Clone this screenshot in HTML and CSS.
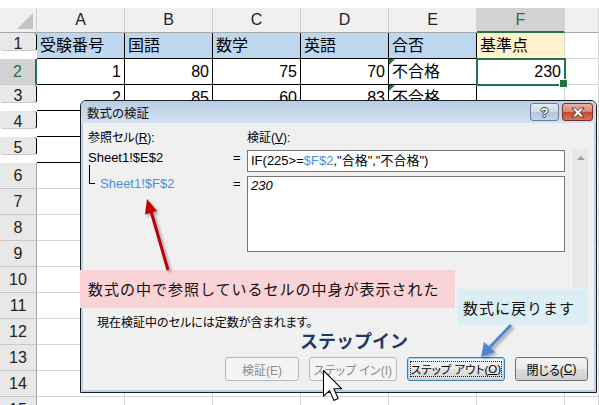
FILE: index.html
```html
<!DOCTYPE html>
<html lang="ja">
<head>
<meta charset="utf-8">
<title>数式の検証</title>
<link rel="stylesheet" href="styles.css">
</head>
<body>
<div class="sheet">
  <div class="corner"><svg width="37" height="25" viewBox="0 0 37 25"><polygon points="33,5 33,21 17,21" fill="#c4c4c4"/></svg></div>
  <div class="ch">A</div><div class="ch">B</div><div class="ch">C</div><div class="ch">D</div><div class="ch">E</div><div class="ch sel">F</div><div class="ch"></div>

  <div class="rh tb">1</div>
  <div class="c t hd">受験番号</div><div class="c t hd">国語</div><div class="c t hd">数学</div><div class="c t hd">英語</div><div class="c t hd">合否</div><div class="c yl">基準点</div><div class="c"></div>

  <div class="rh sel">2</div>
  <div class="c t n">1</div><div class="c t n">80</div><div class="c t n">75</div><div class="c t n">70</div><div class="c t err">不合格</div><div class="c n cur">230</div><div class="c"></div>

  <div class="rh tb">3</div>
  <div class="c t n">2</div><div class="c t n">85</div><div class="c t n">60</div><div class="c t n">83</div><div class="c t err">不合格</div><div class="c"></div><div class="c"></div>

  <div class="rh tb">4</div>
  <div class="c t"></div><div class="c t"></div><div class="c t"></div><div class="c t"></div><div class="c t"></div><div class="c"></div><div class="c"></div>

  <div class="rh tb">5</div>
  <div class="c t"></div><div class="c t"></div><div class="c t"></div><div class="c t"></div><div class="c t"></div><div class="c"></div><div class="c"></div>

  <div class="rh">6</div><div class="c"></div><div class="c"></div><div class="c"></div><div class="c"></div><div class="c"></div><div class="c"></div><div class="c"></div>
  <div class="rh">7</div><div class="c"></div><div class="c"></div><div class="c"></div><div class="c"></div><div class="c"></div><div class="c"></div><div class="c"></div>
  <div class="rh">8</div><div class="c"></div><div class="c"></div><div class="c"></div><div class="c"></div><div class="c"></div><div class="c"></div><div class="c"></div>
  <div class="rh">9</div><div class="c"></div><div class="c"></div><div class="c"></div><div class="c"></div><div class="c"></div><div class="c"></div><div class="c"></div>
  <div class="rh">10</div><div class="c"></div><div class="c"></div><div class="c"></div><div class="c"></div><div class="c"></div><div class="c"></div><div class="c"></div>
  <div class="rh">11</div><div class="c"></div><div class="c"></div><div class="c"></div><div class="c"></div><div class="c"></div><div class="c"></div><div class="c"></div>
  <div class="rh">12</div><div class="c"></div><div class="c"></div><div class="c"></div><div class="c"></div><div class="c"></div><div class="c"></div><div class="c"></div>
  <div class="rh">13</div><div class="c"></div><div class="c"></div><div class="c"></div><div class="c"></div><div class="c"></div><div class="c"></div><div class="c"></div>
  <div class="rh">14</div><div class="c"></div><div class="c"></div><div class="c"></div><div class="c"></div><div class="c"></div><div class="c"></div><div class="c"></div>
  <div class="rh">15</div><div class="c"></div><div class="c"></div><div class="c"></div><div class="c"></div><div class="c"></div><div class="c"></div><div class="c"></div>
</div>

<div class="dialog">
  <div class="titlebar">
    <span class="title">数式の検証</span>
    <div class="tbtns">
      <div class="tb help"><span>?</span></div>
      <div class="tb close"><svg width="16" height="11" viewBox="0 0 16 11"><path d="M2 1 L5.5 1 L8 3.6 L10.5 1 L14 1 L10 5.5 L14 10 L10.5 10 L8 7.4 L5.5 10 L2 10 L6 5.5 Z" fill="#fff" stroke="#3a3a3a" stroke-width="0.9" stroke-linejoin="round"/></svg></div>
    </div>
  </div>
  <div class="body">
    <div class="form">
      <div class="lbl c1">参照セル(<u>R</u>):</div>
      <div class="lbl c3">検証(<u>V</u>):</div>
      <div class="ref r2">Sheet1!$E$2</div>
      <div class="eq r2">=</div>
      <div class="box r2 formula">IF(225&gt;=<span class="blue">$F$2</span>,"合格","不合格")</div>
      <div class="ref r3"><span class="tree"></span><span class="blue">Sheet1!$F$2</span></div>
      <div class="eq r3">=</div>
      <div class="box r3 value">230</div>
      <div class="scroll"><span class="up"></span></div>
    </div>
    <div class="msg">現在検証中のセルには定数が含まれます。</div>
    <div class="buttons">
      <div class="btn dis w1">検証(E)</div>
      <div class="btn dis w2">ステップ イン(I)</div>
      <div class="btn focus w3"><span class="ring">ステップ アウト(<u>O</u>)</span></div>
      <div class="btn w4">閉じる(<u>C</u>)</div>
    </div>
  </div>
</div>

<div class="note pink">数式の中で参照しているセルの中身が表示された</div>
<div class="note lblue">数式に戻ります</div>
<div class="steplabel">ステップイン</div>

<svg class="overlay" width="599" height="405" viewBox="0 0 599 405">
  <defs>
    <filter id="sh" x="-50%" y="-50%" width="200%" height="200%">
      <feDropShadow dx="2" dy="2" stdDeviation="1.5" flood-color="#000" flood-opacity="0.35"/>
    </filter>
  </defs>
  <g filter="url(#sh)">
    <line x1="168" y1="270" x2="151" y2="211" stroke="#c00000" stroke-width="3"/>
    <polygon points="147,199 157,211 145,214.5" fill="#c00000"/>
  </g>
  <g filter="url(#sh)">
    <line x1="511" y1="325" x2="489" y2="348" stroke="#4f86d0" stroke-width="3"/>
    <polygon points="481,357 484,342 495,352" fill="#4f86d0"/>
  </g>
  <path transform="translate(323.5,370.5) scale(1.22)" d="M0 0 L0 21 L5 16.5 L8.5 24.5 L12 23 L8.5 15 L15 15 Z" fill="#fff" stroke="#000" stroke-width="0.9" stroke-linejoin="round"/>
</svg>
</body>
</html>
```

FILE: styles.css
```css
* { box-sizing: border-box; }
html, body { margin: 0; padding: 0; }
body {
  width: 599px;
  height: 405px;
  overflow: hidden;
  position: relative;
  background: #fff;
  font-family: "Liberation Sans", "Noto Sans CJK JP", sans-serif;
  color: #000;
}

/* ---------- spreadsheet ---------- */
.sheet {
  padding-top: 8px;
  display: grid;
  grid-template-columns: 37px repeat(6, 88px) 1fr;
  grid-template-rows: 25px;
  grid-auto-rows: 26px;
}
.corner {
  background: #f0f0f0;
  border-right: 1px solid #d0d0d0;
  border-bottom: 1px solid #a8a8a8;
}
.corner svg { display: block; }
.ch {
  background: #f0f0f0;
  border-right: 1px solid #d4d4d4;
  border-bottom: 1px solid #a8a8a8;
  display: flex;
  align-items: center;
  justify-content: center;
  font-size: 16px;
  color: #222;
}
.ch.sel {
  background: #d2d2d2;
  color: #217346;
  border-bottom: 2px solid #217346;
}
.rh {
  background: #e8e8e8;
  border-right: 1px solid #a8a8a8;
  border-bottom: 1px solid #c8c8c8;
  display: flex;
  align-items: flex-start;
  justify-content: center;
  padding-top: 5px;
  font-size: 16px;
  line-height: 16px;
  color: #222;
}
.rh.tb { border-right-color: #000; }
.rh.sel {
  background: #d2d2d2;
  color: #217346;
  border-right: 2px solid #217346;
}
.c {
  border-right: 1px solid #d4d4d4;
  border-bottom: 1px solid #d4d4d4;
  display: flex;
  align-items: center;
  padding: 0 3px;
  font-size: 16px;
  line-height: 1;
  white-space: nowrap;
  position: relative;
}
.c.t { border-right-color: #000; border-bottom-color: #000; }
.c.hd { background: #bdd7ee; }
.c.yl { background: #fff2cc; }
.c.n { justify-content: flex-end; }
.c.err::before {
  content: "";
  position: absolute;
  left: 0;
  top: 0;
  border-top: 6px solid #1e7145;
  border-right: 6px solid transparent;
}
.c.cur {
  outline: 2px solid #217346;
  outline-offset: -1px;
  z-index: 1;
}
.c.cur::after {
  content: "";
  position: absolute;
  right: -4px;
  bottom: -4px;
  width: 7px;
  height: 7px;
  background: #217346;
  border: 1px solid #fff;
}

/* ---------- dialog ---------- */
.dialog {
  position: absolute;
  left: 80px;
  top: 100px;
  width: 517px;
  height: 293px;
  border: 1px solid #1e1e1e;
  border-radius: 6px 6px 0 0;
  background: #b9d1ea;
  padding: 0 2px 2px 2px;
  display: flex;
  flex-direction: column;
  font-family: "Liberation Sans", "Noto Sans CJK JP", sans-serif;
  font-feature-settings: "palt";
}
.titlebar {
  height: 22px;
  margin: 0 -2px;
  padding: 0 3px 0 6px;
  border-radius: 5px 5px 0 0;
  background: linear-gradient(#b8cde5, #c9d9ec 60%, #d3e0ef);
  display: flex;
  align-items: center;
  justify-content: space-between;
}
.title { font-size: 12.5px; color: #111; }
.tbtns { display: flex; gap: 3px; }
.tb {
  height: 18px;
  border-radius: 3px;
  display: flex;
  align-items: center;
  justify-content: center;
}
.tb.help {
  width: 29px;
  border: 1px solid #6b7d93;
  background: linear-gradient(#e3ebf5, #ccdaeb 50%, #b2c6df 51%, #c4d5ea);
}
.tb.help span {
  font-weight: bold;
  font-size: 13px;
  line-height: 1;
  color: #fff;
  text-shadow: 1px 0 0 #444, -1px 0 0 #444, 0 1px 0 #444, 0 -1px 0 #444;
}
.tb.close {
  width: 31px;
  border: 1px solid #7b2e22;
  background: linear-gradient(#eab2a4, #d98270 50%, #c9472f 51%, #d8755c);
}
.tb.close svg { display: block; }

.body {
  flex: 1;
  background: #f0f0f0;
  padding: 7px 6px 9px 5px;
  display: flex;
  flex-direction: column;
}
.form {
  display: grid;
  grid-template-columns: 145px 14px 318px 8px 15px;
  grid-template-rows: 16px 22px 76px;
  row-gap: 4px;
}
.lbl { font-size: 12px; line-height: 16px; white-space: nowrap; }
.lbl.c1 { grid-column: 1 / 3; grid-row: 1; }
.lbl.c3 { grid-column: 3; grid-row: 1; }
.r2 { grid-row: 2; }
.r3 { grid-row: 3; }
.ref {
  grid-column: 1;
  font-size: 13px;
  line-height: 16px;
  white-space: nowrap;
  display: flex;
  align-items: flex-start;
}
.ref.r2 { align-self: center; margin-top: -6px; }
.tree {
  width: 6px;
  height: 19px;
  margin-top: -11px;
  margin-left: 1px;
  margin-right: 5px;
  border-left: 1px solid #000;
  border-bottom: 1px solid #000;
  flex: none;
}
.eq { grid-column: 2; font-size: 13px; line-height: 16px; }
.eq.r2 { align-self: center; margin-top: -6px; }
.box {
  grid-column: 3;
  background: #fff;
  border: 1px solid #767676;
  font-size: 13px;
  line-height: 16px;
  padding: 1px 3px;
  white-space: nowrap;
}
.box.formula { padding-top: 2px; }
.box.value { font-style: italic; }
.blue { color: #4a8fe2; }
.scroll {
  grid-column: 5;
  grid-row: 2 / 4;
  align-self: start;
  height: 138px;
  background: #e8e8e8;
  border-left: 1px solid #e2e2e2;
  display: flex;
  justify-content: center;
  padding-top: 6px;
}
.up {
  width: 0;
  height: 0;
  border-left: 4px solid transparent;
  border-right: 4px solid transparent;
  border-bottom: 4px solid #9a9a9a;
}
.msg {
  margin-top: 63px;
  padding-left: 9px;
  font-size: 12px;
  line-height: 16px;
}
.buttons {
  margin-top: 26px;
  display: flex;
  justify-content: flex-end;
  gap: 10px;
}
.btn {
  height: 24px;
  border: 1px solid #707070;
  border-radius: 3px;
  background: linear-gradient(#f3f3f3, #ebebeb 50%, #dddddd 51%, #d0d0d0);
  font-size: 12px;
  display: flex;
  align-items: center;
  justify-content: center;
  white-space: nowrap;
  color: #000;
}
.btn.dis {
  background: #f4f4f4;
  border-color: #b5b8ba;
  color: #8c8c8c;
}
.btn.focus {
  border-color: #3c7fb1;
  box-shadow: inset 0 0 0 1px #a6d8f6;
  background: linear-gradient(#f6f6f6, #ededed 50%, #e0e0e0 51%, #d6d6d6);
  padding: 3px;
}
.ring {
  flex: 1;
  align-self: stretch;
  border: 1px dotted #222;
  display: flex;
  align-items: center;
  justify-content: center;
  font-size: 11.5px;
}
.w1 { width: 74px; }
.w2 { width: 88px; }
.w3 { width: 98px; }
.w4 { width: 73px; }

/* ---------- annotations ---------- */
.note {
  position: absolute;
  display: flex;
  align-items: center;
  font-family: "Noto Sans CJK JP", sans-serif;
  font-size: 15px;
  letter-spacing: 1px;
  color: #111;
}
.pink {
  left: 80px;
  top: 270px;
  width: 375px;
  height: 38px;
  background: #f9d3d5;
  padding: 0 0 2px 8px;
}
.lblue {
  left: 458px;
  top: 289px;
  width: 130px;
  height: 36px;
  background: #daeef4;
  padding-left: 5px;
}
.steplabel {
  position: absolute;
  left: 300px;
  top: 329px;
  font-family: "Noto Sans CJK JP", sans-serif;
  font-weight: bold;
  font-size: 18px;
  line-height: 22px;
  color: #1f3864;
}
.overlay {
  position: absolute;
  left: 0;
  top: 0;
  pointer-events: none;
}
```
